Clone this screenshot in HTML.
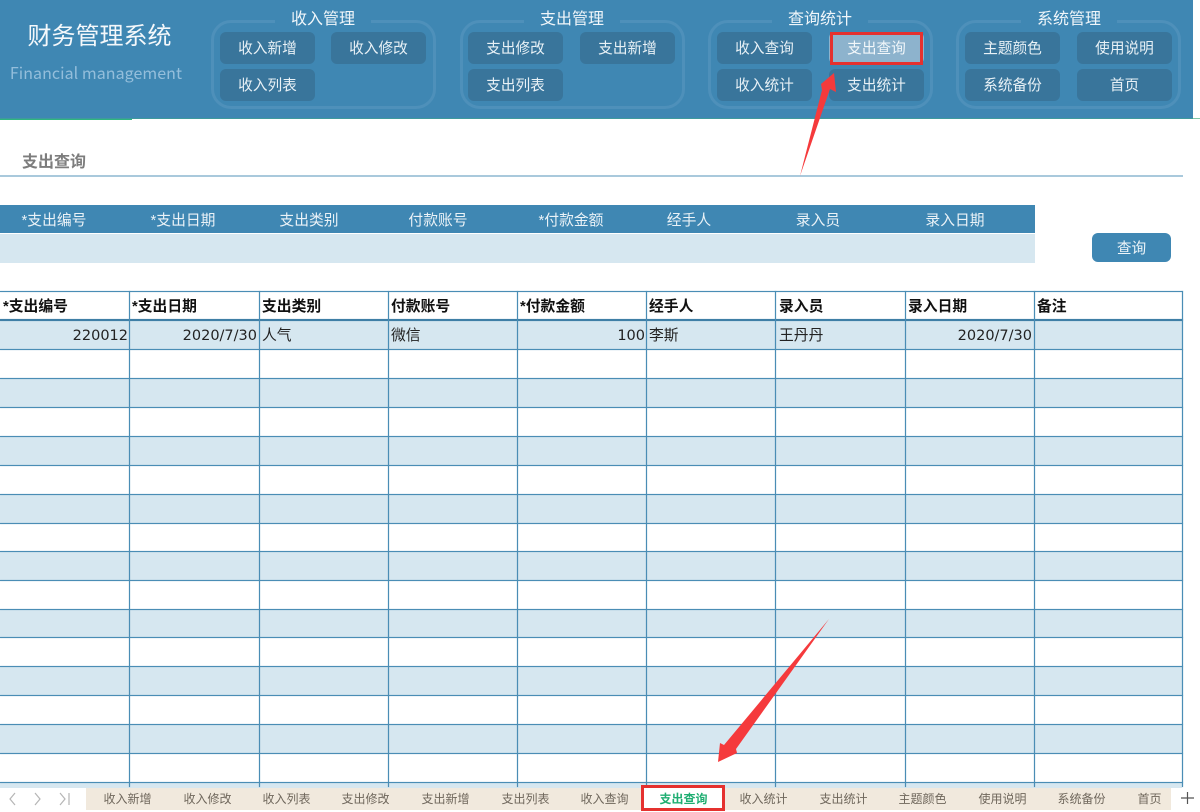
<!DOCTYPE html>
<html lang="zh">
<head>
<meta charset="utf-8">
<title>财务管理系统</title>
<style>
html,body{margin:0;padding:0;background:#fff}
body{position:relative;width:1200px;height:812px;overflow:hidden;font-family:"Liberation Sans","Noto Sans CJK SC",sans-serif}
div{position:absolute;box-sizing:border-box}
.t{white-space:nowrap;text-align:center}
#hd{left:0;top:0;width:1193px;height:118px;background:#3f87b3}
.g{top:20px;width:225px;height:89px;border:3px solid #4e90ba;border-radius:20px}
.gt{top:8px;width:96px;height:20px;line-height:24px;background:#3f87b3;color:#f0f6fa;font-size:16px;text-align:center;white-space:nowrap}
.b{width:95px;height:32px;line-height:34px;background:#39759b;border-radius:6px;color:#e8f1f6;font-size:14.67px;text-align:center;white-space:nowrap}
.fh{top:205px;height:28px;line-height:32px;color:#eaf2f7;font-size:14.8px;white-space:nowrap;text-align:center;width:100px}
.z{left:0;width:1182px;height:29px;background:#d6e7f0}
.h{left:0;width:1183px;height:1px;background:#4a8db5;box-shadow:0 0 1px rgba(74,141,181,.6)}
.v{width:1px;top:291px;height:496px;background:#4a8db5;box-shadow:0 0 1px rgba(74,141,181,.7)}
.c{height:29px;line-height:33px;font-size:14.8px;color:#222;white-space:nowrap}
.ch{top:291px;font-weight:bold;color:#111}
.cr{top:320px}
.n{font-family:"DejaVu Sans",sans-serif;font-size:14.5px;text-align:right}
.tab{top:788px;height:21px;line-height:23px;width:79px;font-size:12px;color:#6f675c;text-align:center;white-space:nowrap}
</style>
</head>
<body>
<div id="hd"></div>
<div style="left:1193px;top:118px;width:7px;height:1px;background:#7fc8a8"></div>
<div style="left:0;top:118px;width:132px;height:2px;background:#2fb57f"></div>
<div style="left:0;top:118px;width:1193px;height:1px;background:#3f9a9c"></div>

<div class="t" style="left:0;top:19px;width:199px;height:36px;line-height:36px;font-size:24px;color:#f4f8fb">财务管理系统</div>
<div class="t" style="left:0;top:60px;width:192px;height:24px;line-height:24px;font-size:16px;color:#94bedb;font-family:'Noto Sans CJK SC',sans-serif;letter-spacing:.05px">Financial management</div>

<div class="g" style="left:211px"></div>
<div class="g" style="left:460px"></div>
<div class="g" style="left:708px"></div>
<div class="g" style="left:956px"></div>
<div class="gt" style="left:275px">收入管理</div>
<div class="gt" style="left:524px">支出管理</div>
<div class="gt" style="left:772px">查询统计</div>
<div class="gt" style="left:1021px">系统管理</div>

<div class="b" style="left:220px;top:32px">收入新增</div>
<div class="b" style="left:331px;top:32px">收入修改</div>
<div class="b" style="left:220px;top:69px">收入列表</div>

<div class="b" style="left:468px;top:32px">支出修改</div>
<div class="b" style="left:580px;top:32px">支出新增</div>
<div class="b" style="left:468px;top:69px">支出列表</div>

<div class="b" style="left:717px;top:32px">收入查询</div>
<div class="b" style="left:829px;top:32px;background:#8db3cd;color:#f2f7fa">支出查询</div>
<div class="b" style="left:717px;top:69px">收入统计</div>
<div class="b" style="left:829px;top:69px">支出统计</div>
<div style="left:830px;top:32px;width:93px;height:33px;border:3px solid #e5312f"></div>

<div class="b" style="left:965px;top:32px">主题颜色</div>
<div class="b" style="left:1077px;top:32px">使用说明</div>
<div class="b" style="left:965px;top:69px">系统备份</div>
<div class="b" style="left:1077px;top:69px">首页</div>

<div style="left:22px;top:150px;height:22px;line-height:26px;font-size:16px;font-weight:bold;color:#7d7d7d;white-space:nowrap">支出查询</div>
<div style="left:0;top:175px;width:1183px;height:2px;background:#a9c9dc"></div>

<div style="left:0;top:205px;width:1035px;height:28px;background:#3f87b3"></div>
<div style="left:0;top:234px;width:1035px;height:29px;background:#d6e7f0"></div>
<div class="fh" style="left:4px">*支出编号</div>
<div class="fh" style="left:133px">*支出日期</div>
<div class="fh" style="left:259px">支出类别</div>
<div class="fh" style="left:388px">付款账号</div>
<div class="fh" style="left:521px">*付款金额</div>
<div class="fh" style="left:639px">经手人</div>
<div class="fh" style="left:768px">录入员</div>
<div class="fh" style="left:905px">录入日期</div>

<div style="left:1092px;top:233px;width:79px;height:29px;line-height:32px;background:#3f87b3;border-radius:6px;color:#eef5f9;font-size:14.67px;text-align:center">查询</div>

<div class="z" style="top:320px"></div>
<div class="z" style="top:378px"></div>
<div class="z" style="top:436px"></div>
<div class="z" style="top:494px"></div>
<div class="z" style="top:552px"></div>
<div class="z" style="top:609px"></div>
<div class="z" style="top:667px"></div>
<div class="z" style="top:725px"></div>
<div class="z" style="top:782px;height:6px"></div>

<div class="h" style="top:291px"></div>
<div class="h" style="top:319px;height:2px;background:#3f7fa6"></div>
<div class="h" style="top:349px"></div>
<div class="h" style="top:378px"></div>
<div class="h" style="top:407px"></div>
<div class="h" style="top:436px"></div>
<div class="h" style="top:465px"></div>
<div class="h" style="top:494px"></div>
<div class="h" style="top:523px"></div>
<div class="h" style="top:551px"></div>
<div class="h" style="top:580px"></div>
<div class="h" style="top:609px"></div>
<div class="h" style="top:637px"></div>
<div class="h" style="top:666px"></div>
<div class="h" style="top:695px"></div>
<div class="h" style="top:724px"></div>
<div class="h" style="top:753px"></div>
<div class="h" style="top:782px"></div>

<div class="v" style="left:129px"></div>
<div class="v" style="left:259px"></div>
<div class="v" style="left:388px"></div>
<div class="v" style="left:517px"></div>
<div class="v" style="left:646px"></div>
<div class="v" style="left:775px"></div>
<div class="v" style="left:905px"></div>
<div class="v" style="left:1034px"></div>
<div class="v" style="left:1182px"></div>

<div class="c ch" style="left:3px">*支出编号</div>
<div class="c ch" style="left:132px">*支出日期</div>
<div class="c ch" style="left:262px">支出类别</div>
<div class="c ch" style="left:391px">付款账号</div>
<div class="c ch" style="left:520px">*付款金额</div>
<div class="c ch" style="left:649px">经手人</div>
<div class="c ch" style="left:779px">录入员</div>
<div class="c ch" style="left:908px">录入日期</div>
<div class="c ch" style="left:1037px">备注</div>

<div class="c cr n" style="left:30px;width:98px">220012</div>
<div class="c cr n" style="left:160px;width:97px">2020/7/30</div>
<div class="c cr" style="left:262px">人气</div>
<div class="c cr" style="left:391px">微信</div>
<div class="c cr n" style="left:540px;width:105px">100</div>
<div class="c cr" style="left:649px">李斯</div>
<div class="c cr" style="left:779px">王丹丹</div>
<div class="c cr n" style="left:935px;width:97px">2020/7/30</div>

<div style="left:0;top:788px;width:1200px;height:24px;background:#fff"></div>
<div style="left:86px;top:788px;width:1085px;height:22px;background:#f1e9dd"></div>
<svg style="position:absolute;left:0;top:788px" width="86" height="22" viewBox="0 0 86 22" fill="none" stroke="#b5b5b5" stroke-width="1.2">
<path d="M15 5l-5 6 5 6"/>
<path d="M35 5l5 6-5 6"/>
<path d="M60 5l5 6-5 6M69 5v12"/>
</svg>
<div class="tab" style="left:88px">收入新增</div>
<div class="tab" style="left:168px">收入修改</div>
<div class="tab" style="left:247px">收入列表</div>
<div class="tab" style="left:326px">支出修改</div>
<div class="tab" style="left:406px">支出新增</div>
<div class="tab" style="left:486px">支出列表</div>
<div class="tab" style="left:565px">收入查询</div>
<div style="left:641px;top:785px;width:84px;height:26px;background:#fff;border:3px solid #e5312f"></div>
<div class="tab" style="left:644px;color:#1fae72;font-weight:bold">支出查询</div>
<div class="tab" style="left:724px">收入统计</div>
<div class="tab" style="left:804px">支出统计</div>
<div class="tab" style="left:883px">主题颜色</div>
<div class="tab" style="left:963px">使用说明</div>
<div class="tab" style="left:1042px">系统备份</div>
<div class="tab" style="left:1110px">首页</div>
<svg style="position:absolute;left:1178px;top:788px" width="20" height="20" viewBox="0 0 20 20" fill="none" stroke="#555" stroke-width="1.2">
<path d="M9.5 4v12M3 10h13"/>
</svg>

<svg style="position:absolute;left:0;top:0" width="1200" height="812" viewBox="0 0 1200 812">
<polygon points="800,176 822,90 821,84 834,73 836,92 830,89" fill="#f53a3c"/>
<polygon points="829,619 736,749 737,753 718,762 720,743 724,745" fill="#f53a3c"/>
</svg>
</body>
</html>
